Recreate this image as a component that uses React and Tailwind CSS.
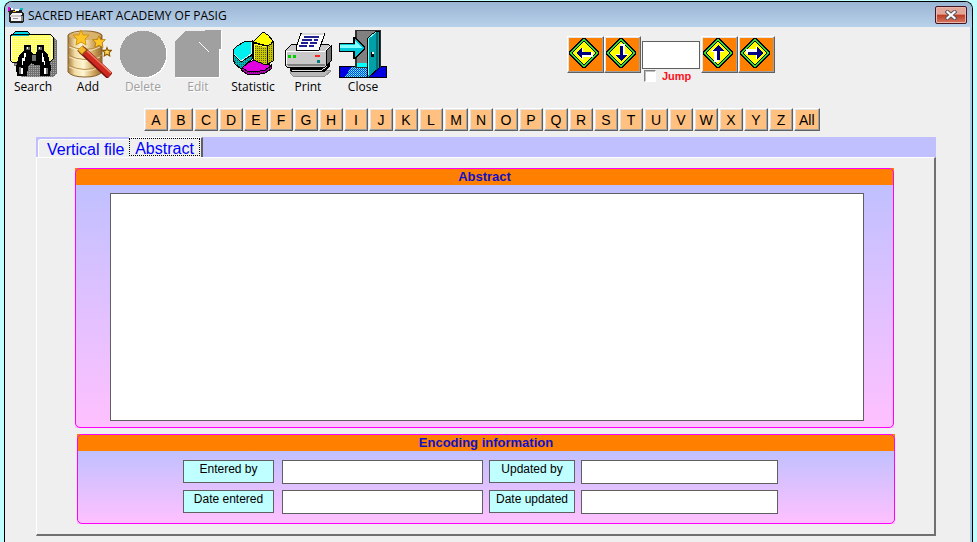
import React from "react";

const LETTERS = "ABCDEFGHIJKLMNOPQRSTUVWXYZ".split("").concat("All");

function SearchIcon() {
  return (
    <svg viewBox="0 0 48 48" className="size-12" shapeRendering="crispEdges" aria-hidden="true">
      <defs>
        <pattern id="folderDither" width="2" height="2" patternUnits="userSpaceOnUse">
          <rect width="2" height="2" fill="#ffff60" />
          <rect width="1" height="1" fill="#ffffb0" />
        </pattern>
        <pattern id="greyDither" width="2" height="2" patternUnits="userSpaceOnUse">
          <rect width="2" height="2" fill="#707070" />
          <rect width="1" height="1" fill="#a8a8a8" />
        </pattern>
      </defs>
      <path d="M5 8H45L48 11V43L45 47H12L12 36H5Z" fill="url(#greyDither)" />
      <path d="M4 4L7 1H18L21 4V6H4Z" fill="#00d8e8" stroke="#000" strokeWidth="1" />
      <path d="M1 7L3 4H41L44 7V29L41 32H3L1 30Z" fill="url(#folderDither)" stroke="#000" strokeWidth="1" />
      <path d="M3 5H20" stroke="#00b0c0" fill="none" />
      <path d="M2 7V29M42 6V30" stroke="#fff" fill="none" />
      <path d="M15 15H22V21L24 24H27L28 21V15H35V20L39 25L42 37L41 46H31V35H26L22 33L19 36L18 46H8L7 37L10 25L15 20Z" fill="#000" />
      <path d="M17 17H21V20H17ZM29 17H33V20H29Z" fill="#606060" />
      <path d="M18 17H19V19H18ZM30 17H31V19H30ZM17 23V27H16V31H14V35H13V28H15V23ZM34 23V27H35V31H36V35H35V32H33V23ZM12 38H14V44H12ZM35 38H37V44H35Z" fill="#fff" />
      <path d="M10 37H12V44H10ZM37 38H39V44H37ZM23 25H27V31H23Z" fill="#707070" />
    </svg>
  );
}

function AddIcon() {
  const star = "M0 -8L2 -3L8 -3L4 1L5 7L0 4L-5 7L-4 1L-8 -3L-2 -3Z";
  return (
    <svg viewBox="0 0 48 48" className="size-12" aria-hidden="true">
      <defs>
        <linearGradient id="cylinder">
          <stop offset="0" stopColor="#a5793c" />
          <stop offset=".2" stopColor="#f0dca4" />
          <stop offset=".45" stopColor="#fff6d2" />
          <stop offset=".75" stopColor="#d0a55e" />
          <stop offset="1" stopColor="#94682c" />
        </linearGradient>
      </defs>
      <path d="M4 5Q8 1 21 1Q34 1 38 5V42Q34 47 21 47Q8 47 4 42Z" fill="url(#cylinder)" stroke="#8a6228" />
      <ellipse cx="21" cy="6" rx="16" ry="4" fill="#d9b36c" />
      <path d="M4 15Q21 24 38 15M4 25Q21 34 38 25M4 35Q21 44 38 35" fill="none" stroke="#b98e4c" />
      <path d="M5 17Q21 25 36 17M5 27Q21 35 36 27M5 37Q21 45 36 37" fill="none" stroke="#fff8dc" strokeOpacity=".7" />
      <path d="M18 20L46 46" stroke="#7b1512" strokeWidth="8" />
      <path d="M19 20L46 45" stroke="#d02a20" strokeWidth="6" />
      <path d="M21 19L47 43" stroke="#f07c66" strokeWidth="1.5" />
      <path d="M16 18L21 23" stroke="#8a4b14" strokeWidth="8" />
      <path d="M16 18L20 22" stroke="#f5b82d" strokeWidth="6" />
      <path transform="translate(17 8)" d={star} fill="#ffc526" stroke="#d49613" />
      <path transform="translate(35 12) scale(.8)" d={star} fill="#ffc526" stroke="#b37b05" />
      <path transform="translate(43 22) scale(.55)" d={star} fill="#ffd65a" stroke="#8a5a00" strokeWidth="2" />
    </svg>
  );
}

function DeleteIcon() {
  return (
    <svg viewBox="0 0 48 48" className="size-12" shapeRendering="crispEdges" aria-hidden="true">
      <circle cx="25" cy="25" r="23.5" fill="#fff" />
      <circle cx="24" cy="24" r="23.5" fill="#a0a0a0" />
    </svg>
  );
}

function EditIcon() {
  const page = "M1 47V11L11 1H31V0H47V19H45V47Z";
  return (
    <svg viewBox="0 0 48 48" className="size-12" shapeRendering="crispEdges" aria-hidden="true">
      <path d={page} fill="#fff" transform="translate(1 1)" />
      <path d={page} fill="#a0a0a0" />
      <path d="M25 12L35 22" stroke="#fff" />
    </svg>
  );
}

function StatisticIcon() {
  return (
    <svg viewBox="0 0 48 48" className="size-12" shapeRendering="crispEdges" aria-hidden="true">
      <defs>
        <pattern id="yellowDither" width="2" height="2" patternUnits="userSpaceOnUse">
          <rect width="2" height="2" fill="#c8c800" />
          <rect width="1" height="1" fill="#606000" />
        </pattern>
        <pattern id="magentaDither" width="2" height="2" patternUnits="userSpaceOnUse">
          <rect width="2" height="2" fill="#c000c0" />
          <rect width="1" height="1" fill="#600060" />
        </pattern>
        <pattern id="cyanDither" width="2" height="2" patternUnits="userSpaceOnUse">
          <rect width="2" height="2" fill="#00b8b8" />
          <rect width="1" height="1" fill="#006060" />
        </pattern>
      </defs>
      <path d="M12 37V40L18 44L27 45L36 43L42 39V35Z" fill="url(#magentaDither)" stroke="#000" />
      <path d="M12 37L17 34L25 30L38 33L42 36L36 40L27 42L18 41Z" fill="#e000e0" stroke="#000" />
      <path d="M4 22L12 32L23 25V29L12 39L6 34L4 29Z" fill="url(#cyanDither)" stroke="#000" />
      <path d="M23 11V24L12 32L4 24V20L8 16L15 12Z" fill="#00f0f0" stroke="#000" />
      <path d="M5 24L12 31L22 24V12" fill="none" stroke="#d8ffff" />
      <path d="M24 13L38 16L44 12V31L37 35L24 30Z" fill="url(#yellowDither)" stroke="#000" />
      <path d="M24 12L29 7L34 2L39 5L44 11L42 14L38 16Z" fill="#ffff00" stroke="#000" />
      <path d="M38 16V34" stroke="#000" />
      <path d="M25 29V14L37 17" stroke="#ffff40" fill="none" />
    </svg>
  );
}

function PrintIcon() {
  return (
    <svg viewBox="0 0 48 48" className="size-12" shapeRendering="crispEdges" aria-hidden="true">
      <path d="M6 40H44L47 41L41 46H9L7 44Z" fill="#b8b8b8" stroke="#909090" />
      <path d="M5 37H40L46 33V37L40 42H7Z" fill="#000" />
      <path d="M8 40H38L43 36" stroke="#e0e0e0" fill="none" />
      <path d="M1 21L8 14H44L47 17V31L41 37H3L1 35Z" fill="#c8c8c8" stroke="#000" />
      <path d="M42 21L47 16V31L42 36Z" fill="#707070" stroke="#000" />
      <path d="M2 21H41L46 16" stroke="#fff" fill="none" />
      <path d="M2 22V34" stroke="#fff" fill="none" />
      <path d="M3 34H41V36H4Z" fill="#808080" />
      <path d="M12 18L17 3H41L35 20H12Z" fill="#fff" stroke="#000" />
      <path d="M18 3L17 5H39L40 3Z" fill="#d8d8d8" />
      <path d="M20 7H35M18 10H28M30 10H34M17 13H24M26 13H33M15 16H23M25 16H30" stroke="#202090" strokeWidth="1.5" />
      <path d="M4 25H7V28H4ZM9 25H12V28H9Z" fill="#00d000" />
      <path d="M31 25H36V27H31Z" fill="#ff2020" />
      <path d="M33 30H36V33H33Z" fill="#008080" />
    </svg>
  );
}

function CloseIcon() {
  return (
    <svg viewBox="0 0 48 48" className="size-12" shapeRendering="crispEdges" aria-hidden="true">
      <defs>
        <pattern id="floorDither" width="2" height="2" patternUnits="userSpaceOnUse">
          <rect width="2" height="2" fill="#0040e0" />
          <rect width="1" height="1" fill="#60ffff" />
          <rect x="1" y="1" width="1" height="1" fill="#40c0ff" />
        </pattern>
      </defs>
      <path d="M0 36H48V48H0Z" fill="#000" />
      <path d="M1 37H20V47H1ZM36 37H47V47H31Z" fill="#0000e0" />
      <path d="M12 37H28V47H6Z" fill="url(#floorDither)" />
      <path d="M16 0H42V38H16Z" fill="#303030" />
      <path d="M18 1H37V33H18Z" fill="#808080" />
      <path d="M18 33H28V37H18Z" fill="#00ffff" />
      <path d="M28 9L37 1H40V38L30 47H28Z" fill="#00a0a8" stroke="#000" />
      <path d="M37 2H39V38L37 40Z" fill="#006c70" />
      <path d="M29 45V9L37 2" fill="none" stroke="#80ffff" />
      <path d="M32 22H35V27H32Z" fill="#000" />
      <path d="M33 22H35V24H33Z" fill="#fff" />
      <path d="M0 13H14V7H17L26 17V19L17 29H14V22H0Z" fill="#000" />
      <path d="M1 14H16V9L25 18L16 27V21H1Z" fill="#00c8d8" />
      <path d="M1 15H16V11L21 16L23 18H1Z" fill="#80ffff" />
    </svg>
  );
}

function SystemIcon() {
  return (
    <svg viewBox="0 0 16 16" className="size-4 shrink-0" shapeRendering="crispEdges" aria-hidden="true">
      <path d="M0 1H3L4 3H14L15 6H16V14L14 16H2L1 14L1 8Z" fill="#202020" />
      <path d="M4 6H14V8H3ZM3 10H13V14H3Z" fill="#f4f4f4" />
      <path d="M2 8H13V10H2Z" fill="#c8c8c8" />
      <path d="M5 11H10V12H5ZM13 9H15V14H13Z" fill="#909090" />
      <path d="M0 0H2V4H0Z" fill="#e000e0" />
      <path d="M3 1H5V3H3ZM7 2H11V4H7Z" fill="#fff" />
      <path d="M12 1H15V3H12Z" fill="#00c0c0" />
      <path d="M5 4H8V5H5Z" fill="#e0c000" />
    </svg>
  );
}

const TOOLS = [
  { name: "Search", Icon: SearchIcon },
  { name: "Add", Icon: AddIcon },
  { name: "Delete", Icon: DeleteIcon, disabled: true },
  { name: "Edit", Icon: EditIcon, disabled: true },
  { name: "Statistic", Icon: StatisticIcon },
  { name: "Print", Icon: PrintIcon },
  { name: "Close", Icon: CloseIcon },
];

const RAISED =
  "border border-t-white border-l-white border-r-[#606060] border-b-[#606060]";

function NavButton({ label, angle }) {
  return (
    <button
      type="button"
      aria-label={label}
      className={`flex h-[37px] w-[37px] bg-[#ff8000] shadow-[inset_-1px_-1px_#a0a0a0,inset_1px_1px_#e3e3e3] ${RAISED}`}
    >
      <svg viewBox="0 0 32 32" className="size-8" shapeRendering="crispEdges" aria-hidden="true">
        <path d="M14 1H17L31 15V17L17 31H14L1 17V15Z" fill="#000" />
        <path d="M15 2H16L30 16L16 30H15L2 16Z" fill="#30e030" />
        <path d="M15 4H16L28 16L16 28H15L4 16Z" fill="#000" />
        <path d="M15 5H16L27 16L16 27H15L5 16Z" fill="#ffff00" />
        <g transform={`rotate(${angle} 16 16)`}>
          <path d="M8 15L14 9V14H24V19H14V23Z" fill="#fff" transform="translate(1 1)" />
          <path d="M8 16L14 10V14.500H23V17.500H14V22Z" fill="#000080" />
        </g>
      </svg>
    </button>
  );
}

function GroupBox({ title, className, children }) {
  return (
    <section
      className={`relative after:pointer-events-none after:absolute after:inset-0 after:rounded-[5px] after:border after:border-[#ff00ff] ${className}`}
    >
      <h2 className="h-[17px] bg-[#ff8000] pt-px text-center text-[13px] leading-4 font-bold text-[#1010c8]">
        {title}
      </h2>
      <div className="bg-linear-to-b from-[#c0c0ff] to-[#ffc0ff] pb-px">{children}</div>
    </section>
  );
}

function Field({ id, label, inputClass = "" }) {
  return (
    <>
      <label
        htmlFor={id}
        className="h-[23px] border border-[#606060] bg-[#c0ffff] text-center text-xs leading-[17px] whitespace-nowrap text-black"
      >
        {label}
      </label>
      <input
        id={id}
        type="text"
        className={`h-6 border border-[#606060] bg-white px-1 text-xs outline-none ${inputClass}`}
      />
    </>
  );
}

export default function App() {
  return (
    <div className="flex min-h-screen flex-col bg-[#c0ffff] px-1 pt-px font-['Liberation_Sans',Arial,sans-serif]">
      <main className="flex grow flex-col overflow-hidden rounded-t-lg border border-b-0 border-black bg-[#efefef]">
        <header className="flex h-[25px] items-center bg-linear-to-b from-[#9ab5d3] to-[#b9d1ea] pr-[5px] pl-[3px]">
          <SystemIcon />
          <h1 className="ml-1 grow pt-[2px] font-['Open_Sans','Noto_Sans',sans-serif] text-xs text-black">
            SACRED HEART ACADEMY OF PASIG
          </h1>
          <button
            type="button"
            aria-label="Close window"
            className="flex h-[18px] w-8 items-center justify-center rounded-[2px] border border-[#431422] bg-linear-to-b from-[#e3a598] from-45% via-[#bd3a20] via-50% to-[#d57762] shadow-[inset_0_0_0_1px_#e9b8ac]"
          >
            <svg viewBox="0 0 12 10" className="h-[10px] w-3" aria-hidden="true">
              <path d="M2.500 2L9.500 8M9.500 2L2.500 8" stroke="#53545f" strokeWidth="4" strokeLinecap="square" />
              <path d="M2.500 2L9.500 8M9.500 2L2.500 8" stroke="#fff" strokeWidth="2.200" strokeLinecap="square" />
            </svg>
          </button>
        </header>

        <div className="flex grow flex-col border-r-2 border-[#a8cbe6] pb-[6px]">
          <div className="flex items-start pt-[3px] pl-1">
            <nav className="flex gap-[7px]" aria-label="Tools">
              {TOOLS.map(({ name, Icon, disabled }) => (
                <button
                  key={name}
                  type="button"
                  disabled={disabled}
                  className="flex w-12 flex-col items-center font-['Open_Sans','Noto_Sans',sans-serif] text-xs leading-[18px] text-black disabled:text-[#a0a0a0] disabled:[text-shadow:1px_1px_#fff]"
                >
                  <Icon />
                  {name}
                </button>
              ))}
            </nav>

            <div className="mt-[6px] ml-[180px] flex items-start">
              <NavButton label="First record" angle={0} />
              <NavButton label="Next record" angle={270} />
              <div className="mx-px mt-[5px]">
                <input
                  type="text"
                  aria-label="Record number"
                  className="block h-7 w-[58px] border border-[#606060] bg-white px-1 text-xs outline-none"
                />
                <label className="mt-px ml-[2px] flex items-center gap-[6px] text-[11px] leading-3 font-bold text-[#ff1020]">
                  <input
                    type="checkbox"
                    className="size-3 appearance-none border border-t-[#808080] border-r-white border-b-white border-l-[#808080] bg-white shadow-[inset_1px_1px_#c0c0c0]"
                  />
                  Jump
                </label>
              </div>
              <NavButton label="Previous record" angle={90} />
              <NavButton label="Last record" angle={180} />
            </div>
          </div>

          <nav className="mt-[12px] flex gap-px pl-[139px]" aria-label="Alphabet">
            {LETTERS.map((letter) => (
              <button
                key={letter}
                type="button"
                className={`h-[23px] min-w-6 bg-[#ffc080] px-1 pt-px text-sm leading-5 text-black shadow-[inset_-1px_-1px_#a0a0a0,inset_1px_1px_#e3e3e3] ${RAISED}`}
              >
                {letter}
              </button>
            ))}
          </nav>

          <div className="mt-[6px] mr-[34px] ml-[31px]">
            <div role="tablist" className="flex h-5 items-end bg-[#c0c0ff] pl-[2px] text-base leading-5">
              <button
                type="button"
                role="tab"
                aria-selected="false"
                className="h-[18px] w-[91px] rounded-tl-[3px] border-t border-l border-white bg-[#efefef] pl-2 text-left leading-[19px] whitespace-nowrap text-[#0000ff]"
              >
                Vertical file
              </button>
              <button
                type="button"
                role="tab"
                aria-selected="true"
                className="h-5 w-[74px] border-t border-r-2 border-t-white border-r-[#606060] bg-[#efefef] pb-px leading-[19px] text-[#0000ff]"
              >
                <span className="block h-[18px] w-[71px] border border-dotted border-black">
                  Abstract
                </span>
              </button>
            </div>

            <div
              role="tabpanel"
              className="border-t border-r-2 border-b-2 border-l border-t-white border-r-[#707070] border-b-[#707070] border-l-white pt-[10px] pr-[39px] pb-[10px] pl-[38px]"
            >
              <GroupBox title="Abstract" className="mr-px">
                <div className="pt-2 pr-[30px] pb-[6px] pl-[35px]">
                  <textarea
                    aria-label="Abstract"
                    className="block h-[228px] w-full resize-none border border-[#606060] bg-white p-1 text-xs outline-none"
                  />
                </div>
              </GroupBox>

              <GroupBox title="Encoding information" className="mt-[6px] ml-[2px]">
                <form className="grid grid-cols-[91px_203px_86px_197px] gap-x-[6px] gap-y-[6px] pt-[9px] pb-[9px] pl-[106px]">
                  <Field id="entered-by" label="Entered by" inputClass="ml-[2px]" />
                  <Field id="updated-by" label="Updated by" />
                  <Field id="date-entered" label="Date entered" inputClass="ml-[2px]" />
                  <Field id="date-updated" label="Date updated" />
                </form>
              </GroupBox>
            </div>
          </div>
        </div>
      </main>
    </div>
  );
}
